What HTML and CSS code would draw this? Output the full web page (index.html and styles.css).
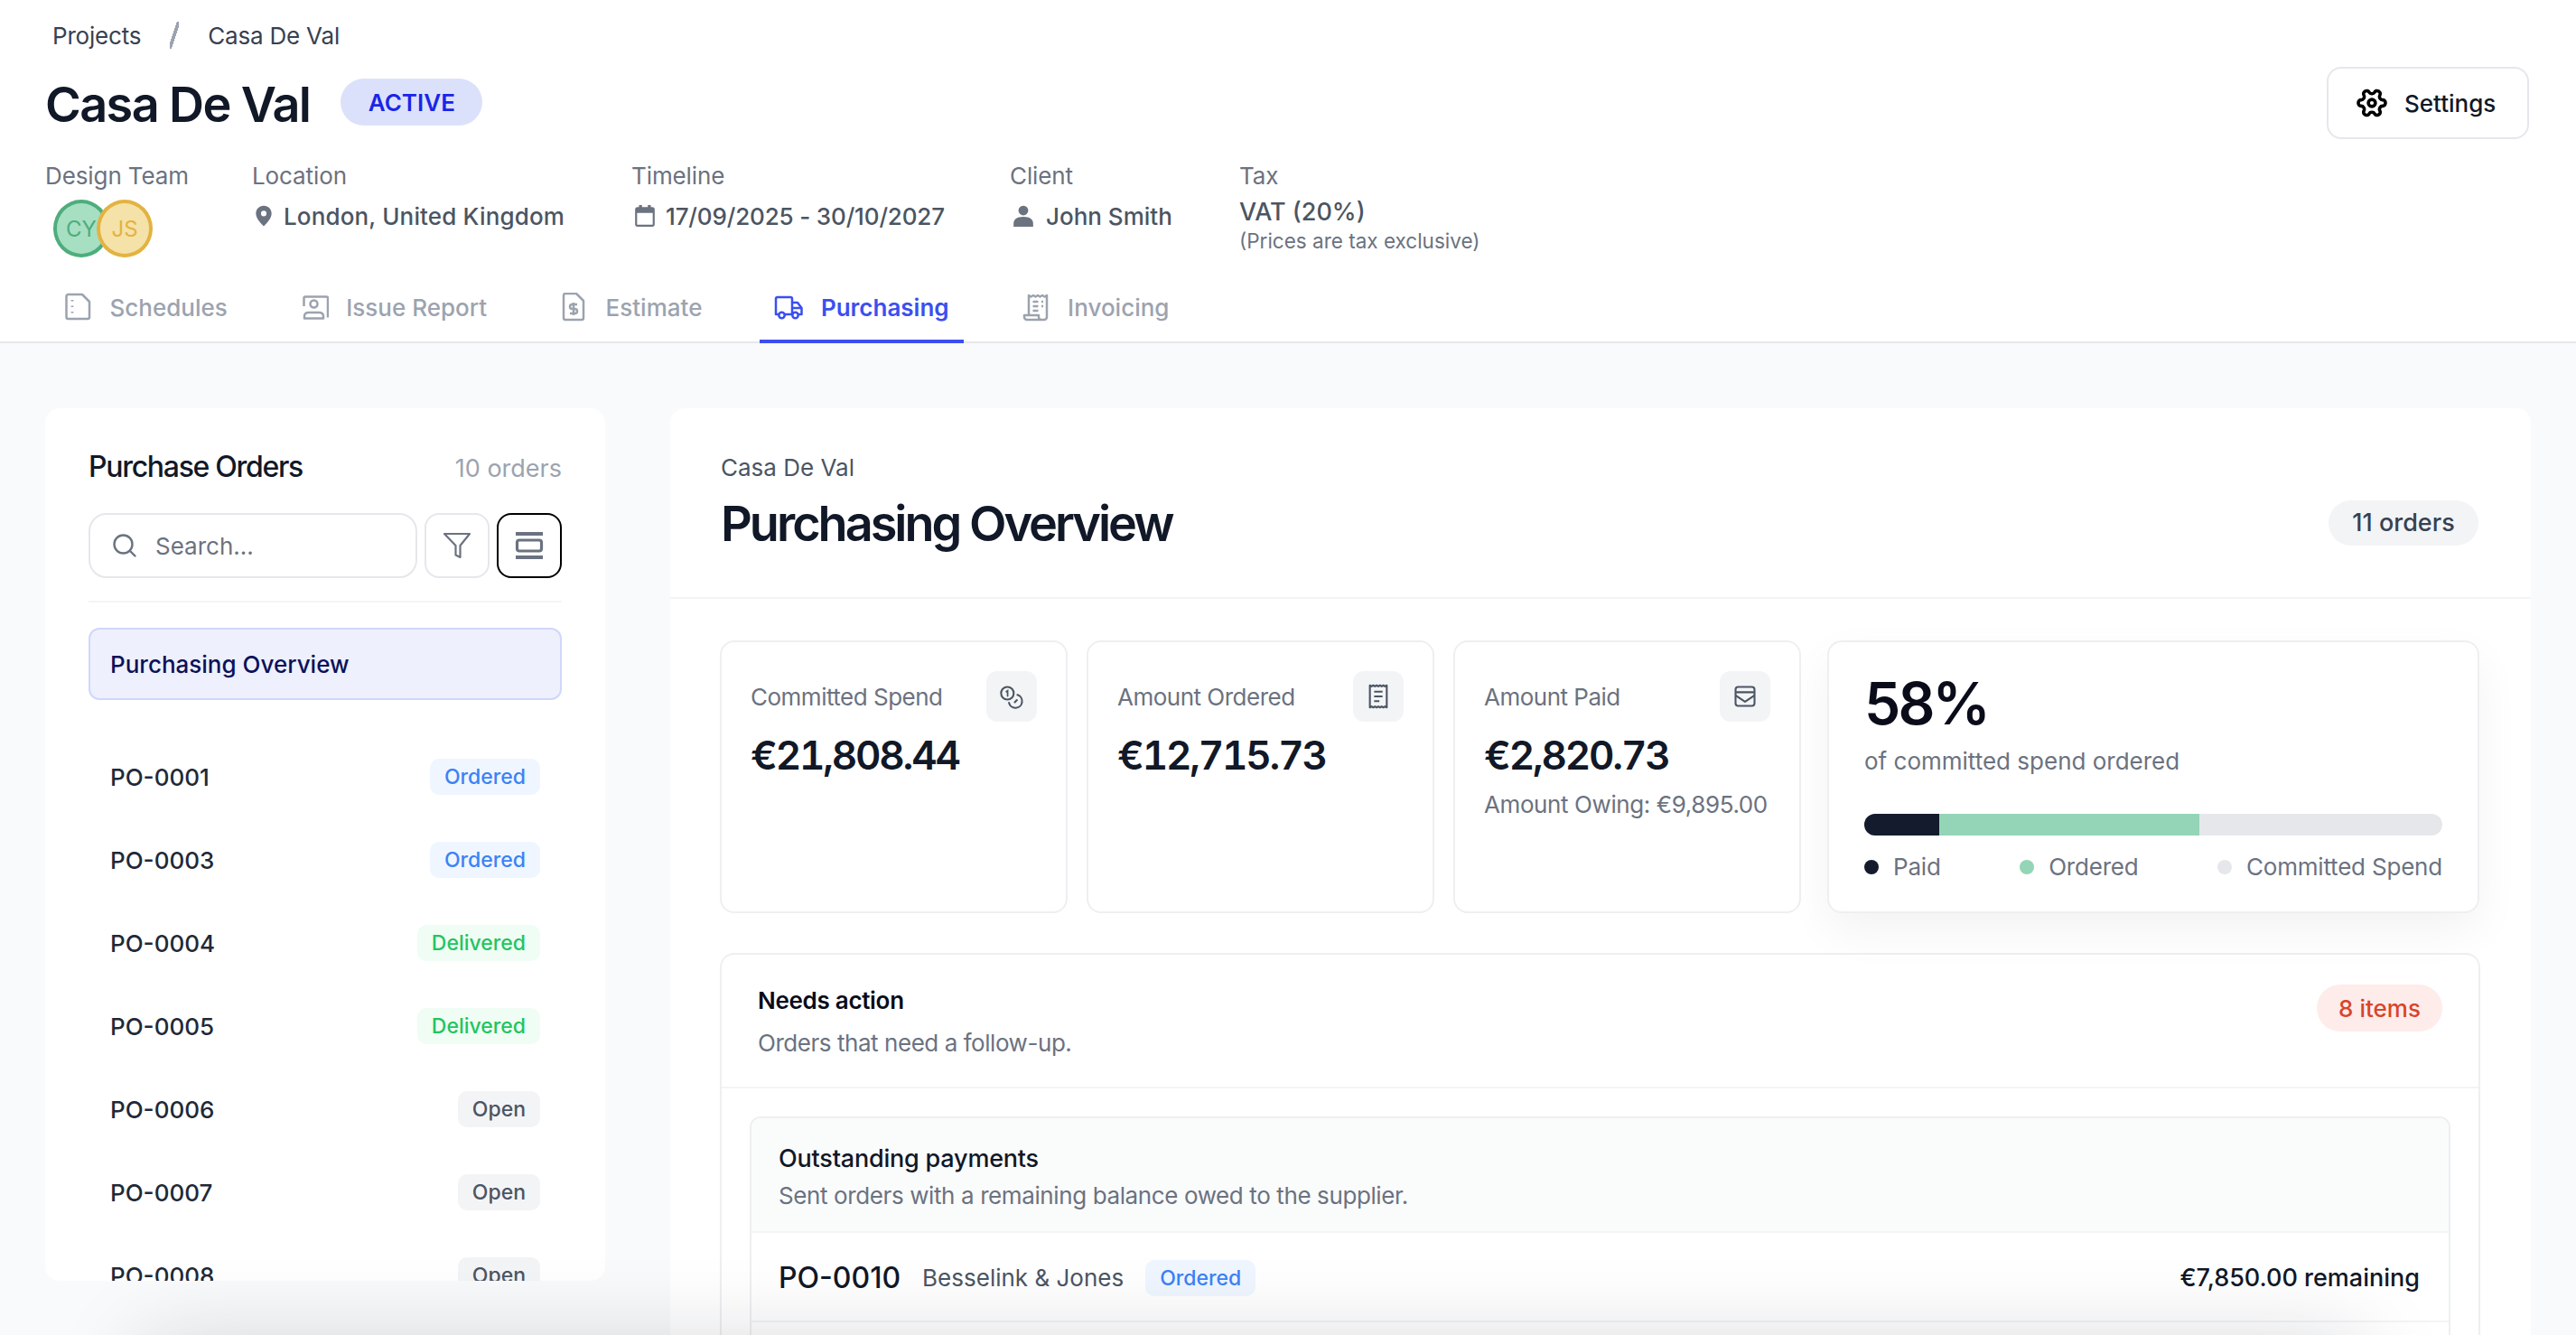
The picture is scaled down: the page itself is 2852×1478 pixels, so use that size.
FILE: index.html
```html
<!DOCTYPE html>
<html lang="en">
<head>
<meta charset="utf-8">
<title>Casa De Val</title>
<link rel="stylesheet" href="styles.css">
</head>
<body>
<div class="page">
  <header class="top">
    <nav class="crumbs"><span>Projects</span><i class="crumb-sep"></i><span>Casa De Val</span></nav>
    <div class="title-row">
      <div class="title-left"><h1>Casa De Val</h1><span class="status">ACTIVE</span></div>
      <button class="settings">
        <svg class="gear" viewBox="0 0 24 24" fill="none" stroke="#000" stroke-width="2.4" stroke-linejoin="round"><path transform="rotate(90 12 12)" d="M12.22 2h-.44a2 2 0 0 0-2 2v.18a2 2 0 0 1-1 1.73l-.43.25a2 2 0 0 1-2 0l-.15-.08a2 2 0 0 0-2.73.73l-.22.38a2 2 0 0 0 .73 2.73l.15.1a2 2 0 0 1 1 1.72v.51a2 2 0 0 1-1 1.74l-.15.09a2 2 0 0 0-.73 2.73l.22.38a2 2 0 0 0 2.73.73l.15-.08a2 2 0 0 1 2 0l.43.25a2 2 0 0 1 1 1.73V20a2 2 0 0 0 2 2h.44a2 2 0 0 0 2-2v-.18a2 2 0 0 1 1-1.73l.43-.25a2 2 0 0 1 2 0l.15.08a2 2 0 0 0 2.73-.73l.22-.39a2 2 0 0 0-.73-2.73l-.15-.08a2 2 0 0 1-1-1.74v-.5a2 2 0 0 1 1-1.74l.15-.09a2 2 0 0 0 .73-2.73l-.22-.38a2 2 0 0 0-2.73-.73l-.15.08a2 2 0 0 1-2 0l-.43-.25a2 2 0 0 1-1-1.73V4a2 2 0 0 0-2-2z"/><circle cx="12" cy="12" r="2.6"/></svg>
        Settings
      </button>
    </div>
    <div class="meta">
      <div class="meta-item m-team"><div class="meta-label">Design Team</div>
        <div class="avatars"><span class="avatar av-green">CY</span><span class="avatar av-yellow">JS</span></div></div>
      <div class="meta-item m-loc"><div class="meta-label">Location</div>
        <div class="meta-value"><svg class="mi" viewBox="0 0 24 24" fill="#6b7280"><path fill-rule="evenodd" d="M12 1.5c-4.6 0-8 3.5-8 8 0 4.8 4.6 10 8 13 3.4-3 8-8.2 8-13 0-4.500-3.400-8-8-8zm0 5.300a2.800 2.800 0 1 1 0 5.600 2.800 2.800 0 0 1 0-5.600z"/></svg>London, United Kingdom</div></div>
      <div class="meta-item m-time"><div class="meta-label">Timeline</div>
        <div class="meta-value"><svg class="mi" viewBox="0 0 24 24" fill="#6b7280"><path fill-rule="evenodd" d="M6 1h3v2h6V1h3v2h1.500A2.500 2.500 0 0 1 22 5.500v15a2.500 2.500 0 0 1-2.500 2.500h-15A2.500 2.500 0 0 1 2 20.500v-15A2.500 2.500 0 0 1 4.500 3H6zM4 9v11.500c0 .3.200.5.500.5h15c.3 0 .5-.2.500-.5V9z"/></svg>17/09/2025 - 30/10/2027</div></div>
      <div class="meta-item m-client"><div class="meta-label">Client</div>
        <div class="meta-value"><svg class="mi" viewBox="0 0 24 24" fill="#6b7280"><circle cx="12" cy="6.500" r="5"/><path d="M2 23v-3c0-4.500 3.500-7 10-7s10 2.500 10 7v3z"/></svg>John Smith</div></div>
      <div class="meta-item m-tax"><div class="meta-label">Tax</div>
        <div class="tax-value">VAT (20%)</div><div class="tax-note">(Prices are tax exclusive)</div></div>
    </div>
    <div class="tabs">
      <a class="tab"><svg class="ti" viewBox="0 0 32 32" fill="none" stroke="currentColor" stroke-width="2.500" stroke-linejoin="round"><path d="M3.500 4a2 2 0 0 1 2-2h15.500l8 8v17a2 2 0 0 1-2 2H5.500a2 2 0 0 1-2-2z"/><path d="M10 8v1.500M10 14.500v1.500M10 21v1.500" stroke-width="2.800"/></svg>Schedules</a>
      <a class="tab"><svg class="ti" viewBox="0 0 32 32" fill="none" stroke="currentColor" stroke-width="2.500" stroke-linejoin="round"><path d="M4.500 15V6a1.500 1.500 0 0 1 1.500-1.500h23.500A1.500 1.500 0 0 1 31 6v21.500"/><circle cx="15.500" cy="12.500" r="4"/><path d="M5 28.500V26c0-2.500 2-4 4.500-4h12c2.500 0 4.500 1.500 4.500 4v2.500z"/></svg>Issue Report</a>
      <a class="tab"><svg class="ti" viewBox="0 0 32 32" fill="none" stroke="currentColor" stroke-width="2.500" stroke-linejoin="round"><path d="M5 3a2 2 0 0 1 2-2h12l8 8v19a2 2 0 0 1-2 2H7a2 2 0 0 1-2-2z"/><path d="M20 13h-5.500a2.400 2.400 0 0 0 0 5h3a2.400 2.400 0 0 1 0 5H12M16 11v14"/></svg>Estimate</a>
      <a class="tab active"><svg class="ti" viewBox="0 0 32 32" fill="none" stroke="currentColor" stroke-width="2.500" stroke-linejoin="round"><path d="M5 24H2V7a2 2 0 0 1 2-2h14a2 2 0 0 1 2 2v17h-8M20 11h6l4.500 6v7H27"/><path d="M20 17h10"/><circle cx="8.500" cy="25" r="3.200"/><circle cx="23.500" cy="25" r="3.200"/></svg>Purchasing</a>
      <a class="tab"><svg class="ti" viewBox="0 0 32 32" fill="none" stroke="currentColor" stroke-width="2.500" stroke-linejoin="round"><path d="M8 25V3l2.500 1.500L13 3l2.500 1.500L18 3l2.500 1.500L23 3l2.500 1.500L28 3v24a3 3 0 0 1-3 3H6a3 3 0 0 1-3-3v-2h16v2a3 3 0 0 0 3 3"/><path d="M12.500 10h6M22 10h2M12.500 15h6M22 15h2M12.500 20h6"/></svg>Invoicing</a>
    </div>
  </header>

  <div class="content">
    <aside class="side">
      <div class="side-head"><h2>Purchase Orders</h2><span class="side-count">10 orders</span></div>
      <div class="tools">
        <div class="search"><svg class="s-ic" viewBox="0 0 28 28" fill="none" stroke="#6b7280" stroke-width="2.400" stroke-linecap="round"><circle cx="12.500" cy="12.500" r="10"/><path d="M20 20l5.500 5.500"/></svg><span>Search...</span></div>
        <button class="tool"><svg class="t-ic" viewBox="0 0 32 32" fill="none" stroke="#6b7280" stroke-width="2.200" stroke-linejoin="round"><path d="M2 3h28L19.500 16v13l-5 -2.500V16z"/></svg></button>
        <button class="tool on"><svg class="t-ic" viewBox="0 0 32 32" fill="none" stroke="#6b7280"><path d="M1 3h30M1 29h30" stroke-width="4"/><rect x="2.500" y="10" width="27" height="12" rx="2.500" stroke-width="3.200"/></svg></button>
      </div>
      <div class="ov-item">Purchasing Overview</div>
      <ul class="po-list">
        <li class="po"><span>PO-0001</span><span class="badge b-ordered">Ordered</span></li>
        <li class="po"><span>PO-0003</span><span class="badge b-ordered">Ordered</span></li>
        <li class="po"><span>PO-0004</span><span class="badge b-delivered">Delivered</span></li>
        <li class="po"><span>PO-0005</span><span class="badge b-delivered">Delivered</span></li>
        <li class="po"><span>PO-0006</span><span class="badge b-open">Open</span></li>
        <li class="po"><span>PO-0007</span><span class="badge b-open">Open</span></li>
        <li class="po"><span>PO-0008</span><span class="badge b-open">Open</span></li>
      </ul>
    </aside>

    <main class="panel">
      <div class="panel-head">
        <div><div class="panel-sup">Casa De Val</div><h2 class="panel-title">Purchasing Overview</h2></div>
        <span class="pill pill-grey">11 orders</span>
      </div>
      <div class="panel-body">
        <div class="stats">
          <div class="stat"><div class="stat-top"><span class="stat-label">Committed Spend</span><span class="stat-ic"><svg viewBox="0 0 24 24" fill="none" stroke="#4b5563" stroke-width="1.800" stroke-linecap="round"><circle cx="8" cy="9" r="6"/><path d="M7 7.500l1.200-.9v5" stroke-width="1.500"/><path d="M17.500 10.600A6.300 6.300 0 1 1 9.500 18M17 15.500l-2 2"/></svg></span></div><div class="stat-val">€21,808.44</div></div>
          <div class="stat"><div class="stat-top"><span class="stat-label">Amount Ordered</span><span class="stat-ic"><svg viewBox="0 0 24 24" fill="none" stroke="#4b5563" stroke-width="1.800" stroke-linejoin="round"><path d="M4 1.500l1.600 1 1.600-1 1.600 1 1.600-1 1.600 1 1.600-1 1.600 1 1.600-1 1.600 1 1.600-1v21l-1.600-1-1.600 1-1.600-1-1.600 1-1.600-1-1.600 1-1.600-1-1.600 1-1.600-1-1.600 1z"/><path d="M8 7.500h8M8 12h8M8 16.500h5"/></svg></span></div><div class="stat-val">€12,715.73</div></div>
          <div class="stat"><div class="stat-top"><span class="stat-label">Amount Paid</span><span class="stat-ic"><svg viewBox="0 0 24 24" fill="none" stroke="#4b5563" stroke-width="1.800" stroke-linejoin="round"><rect x="3" y="3" width="18" height="18" rx="2.500"/><path d="M3 8h18M3 11l9 6 9-6"/></svg></span></div><div class="stat-val">€2,820.73</div><div class="stat-sub">Amount Owing: €9,895.00</div></div>
          <div class="stat stat-wide">
            <div class="pct">58%</div>
            <div class="pct-sub">of committed spend ordered</div>
            <div class="bar"><i class="seg seg-paid"></i><i class="seg seg-ordered"></i></div>
            <div class="legend"><span><i class="dot d-paid"></i>Paid</span><span><i class="dot d-ordered"></i>Ordered</span><span><i class="dot d-spend"></i>Committed Spend</span></div>
          </div>
        </div>
        <section class="action">
          <div class="action-head">
            <div><div class="action-title">Needs action</div><div class="action-desc">Orders that need a follow-up.</div></div>
            <span class="pill pill-red">8 items</span>
          </div>
          <div class="action-body">
            <div class="group">
              <div class="group-head"><div class="group-title">Outstanding payments</div><div class="group-desc">Sent orders with a remaining balance owed to the supplier.</div></div>
              <div class="group-row"><span class="row-id">PO-0010</span><span class="row-sup">Besselink &amp; Jones</span><span class="badge b-ordered">Ordered</span><span class="row-amt">€7,850.00 remaining</span></div>
              <div class="group-row"></div>
            </div>
          </div>
        </section>
      </div>
    </main>
  </div>
  <div class="bottom-glow"></div>
</div>
</body>
</html>
```
FILE: styles.css
```css
* { box-sizing: border-box; }
html, body { margin: 0; padding: 0; }
body { font-family: Inter, "Liberation Sans", sans-serif; color: #111827; }
h1, h2, ul { margin: 0; padding: 0; }
button { font: inherit; background: #fff; cursor: pointer; }
.page { position: relative; width: 2852px; height: 1478px; overflow: hidden; background: #f9fafb; }

.top { height: 380px; background: #fff; border-bottom: 2px solid #e5e7eb; padding: 0 52px 0 50px; position: relative; }
.crumbs { height: 78px; display: flex; align-items: center; gap: 32px; padding-left: 8px; font-size: 26px; letter-spacing: -0.200px; color: #374151; }
.crumb-sep { width: 10px; height: 30px; background: linear-gradient(to bottom right, transparent 40%, #9ca3af 40%, #9ca3af 60%, transparent 60%); }
.title-row { height: 76px; display: flex; align-items: center; justify-content: space-between; }
.title-left { display: flex; align-items: center; gap: 34px; }
h1 { font-size: 54px; line-height: 76px; font-weight: 600; letter-spacing: -1.600px; color: #111827; }
.status { width: 157px; height: 52px; border-radius: 26px; background: #dce1fb; color: #1a25e8; font-size: 26px; font-weight: 600; display: flex; align-items: center; justify-content: center; margin-top: -6px; }
.settings { width: 224px; height: 80px; margin-top: -4px; border: 2px solid #e5e7eb; border-radius: 16px; display: flex; align-items: center; gap: 18px; padding: 0 0 0 30px; font-size: 26px; font-weight: 500; color: #111827; }
.gear { width: 36px; height: 36px; }

.meta { display: flex; margin-top: 25px; height: 116px; }
.meta-item { flex: none; }
.m-team { width: 229px; } .m-loc { width: 420px; } .m-time { width: 419px; } .m-client { width: 254px; }
.meta-label { font-size: 26px; letter-spacing: -0.100px; line-height: 32px; color: #6b7280; }
.avatars { display: flex; padding-left: 9px; margin-top: 10px; }
.avatar { width: 62px; height: 64px; border-radius: 50%; border: 4px solid; font-size: 24px; display: flex; align-items: center; justify-content: center; }
.av-green { background: #a7dfc3; border-color: #4ead7c; color: #4ead7c; }
.av-yellow { background: #f5e2a8; border-color: #e3b341; color: #e3b341; margin-left: -14px; position: relative; }
.meta-value { display: flex; align-items: center; gap: 10px; margin-top: 11px; padding-left: 2px; height: 34px; font-size: 26px; font-weight: 500; color: #4b5563; }
.m-loc .meta-value { gap: 9px; padding-left: 0; letter-spacing: 0.150px; }
.m-time .meta-value { letter-spacing: -0.150px; }
.m-client .meta-value { gap: 12px; }
.mi { width: 26px; height: 26px; flex: none; }
.tax-value { font-size: 27px; font-weight: 500; color: #4b5563; line-height: 36px; margin-top: 6px; }
.tax-note { font-size: 22.500px; color: #6b7280; line-height: 28px; }

.tabs { position: absolute; left: 54px; bottom: -2px; display: flex; gap: 48px; }
.tab { height: 62px; padding: 0 16px 14px; border-bottom: 4px solid transparent; display: flex; align-items: center; gap: 19.500px; font-size: 26px; font-weight: 500; color: #9ca3af; white-space: nowrap; }
.tab.active { color: #3b4ff0; border-bottom-color: #3b4ff0; font-weight: 600; }
.ti { width: 32px; height: 32px; flex: none; }

.content { display: flex; gap: 72px; padding: 72px 50px 0; height: 1098px; align-items: flex-start; }
.side { flex: none; width: 620px; height: 966px; overflow: hidden; background: #fff; border-radius: 16px; padding: 0 48px; }
.side-head { display: flex; align-items: center; justify-content: space-between; height: 64px; margin-top: 32px; }
.side-head h2 { font-size: 32px; font-weight: 500; letter-spacing: -1.300px; color: #111827; }
.side-count { font-size: 27px; color: #9ca3af; padding-top: 4px; }
.tools { display: flex; gap: 8px; margin-top: 20px; padding-bottom: 25px; border-bottom: 2px solid #f3f4f6; }
.search { flex: none; width: 364px; height: 72px; border: 2px solid #e5e7eb; border-radius: 20px; display: flex; align-items: center; gap: 20px; padding-left: 24px; font-size: 26px; color: #6b7280; }
.s-ic { width: 28px; height: 28px; }
.tool { flex: none; width: 72px; height: 72px; border: 2px solid #e5e7eb; border-radius: 16px; display: flex; align-items: center; justify-content: center; padding: 0; }
.tool.on { border: 2px solid #000; }
.t-ic { width: 32px; height: 32px; }
.ov-item { height: 80px; margin-top: 28px; background: #eef0fd; border: 2px solid #d0d7fb; border-radius: 12px; padding-left: 22px; display: flex; align-items: center; font-size: 26px; font-weight: 500; color: #0a1259; }
.po-list { list-style: none; margin-top: 39px; }
.po { height: 92px; display: flex; align-items: center; justify-content: space-between; padding: 0 24px; font-size: 26px; font-weight: 500; color: #1f2937; }
.badge { height: 40px; padding: 0 16px; border-radius: 10px; display: inline-flex; align-items: center; font-size: 23px; font-weight: 500; }
.b-ordered { background: #eff6ff; color: #3b82f6; }
.b-delivered { background: #f0fdf4; color: #22c55e; }
.b-open { background: #f3f4f6; color: #4b5563; }

.panel { flex: none; width: 2060px; height: 1300px; background: #fff; border-radius: 16px 16px 0 0; }
.panel-head { height: 211px; padding: 7px 58px 0 56px; border-bottom: 2px solid #f3f4f6; display: flex; justify-content: space-between; align-items: center; }
.panel-sup { font-size: 26px; line-height: 32px; color: #4b5563; }
.panel-title { font-size: 54px; line-height: 76px; font-weight: 600; letter-spacing: -3px; color: #111827; margin-top: 8px; }
.pill { display: inline-flex; align-items: center; justify-content: center; border-radius: 26px; font-size: 26px; font-weight: 500; }
.pill-grey { width: 166px; height: 50px; background: #f3f4f6; color: #374151; margin-top: 37px; font-size: 27px; }
.panel-body { padding: 46px 56px 0 55px; }
.stats { display: flex; gap: 21px; }
.stat { flex: none; width: 385px; height: 302px; border: 2px solid #eeeff1; border-radius: 16px; padding: 32px; }
.stat-wide { width: 722px; margin-left: 8px; box-shadow: 0 20px 50px rgba(17,24,39,.05); padding: 30px 39px 0; }
.stat-top { display: flex; justify-content: space-between; align-items: center; height: 56px; }
.stat-label { font-size: 26px; letter-spacing: -0.500px; color: #6b7280; }
.stat-ic { width: 56px; height: 56px; border-radius: 12px; background: #f3f4f6; display: flex; align-items: center; justify-content: center; }
.stat-ic svg { width: 28px; height: 28px; }
.stat-val { font-size: 44px; font-weight: 600; font-variant-numeric: tabular-nums; letter-spacing: -2.200px; color: #111827; line-height: 56px; margin-top: 9px; }
.stat-sub { font-size: 26px; letter-spacing: -0.400px; white-space: nowrap; color: #6b7280; line-height: 32px; margin-top: 11px; }
.pct { font-size: 64px; font-weight: 600; line-height: 76px; color: #0a0c1a; letter-spacing: -2.800px; }
.pct-sub { font-size: 26px; color: #6b7280; line-height: 34px; margin-top: 9px; }
.bar { height: 24px; border-radius: 12px; background: #e5e7eb; display: flex; overflow: hidden; margin-top: 41px; }
.seg { display: block; height: 100%; }
.seg-paid { width: 13%; background: #141b2d; }
.seg-ordered { width: 45%; background: #93d5b6; }
.legend { display: flex; justify-content: space-between; margin-top: 19px; font-size: 26px; letter-spacing: -0.200px; color: #6b7280; line-height: 32px; }
.legend span { display: flex; align-items: center; gap: 16px; }
.dot { width: 16px; height: 16px; border-radius: 50%; }
.d-paid { background: #141b2d; } .d-ordered { background: #93d5b6; } .d-spend { background: #e5e7eb; }

.action { margin-top: 44px; border: 2px solid #eeeff1; border-radius: 16px; background: #fff; }
.action-head { height: 148px; padding: 0 40px; border-bottom: 2px solid #f3f4f6; display: flex; justify-content: space-between; align-items: center; }
.action-title { font-size: 26px; font-weight: 600; line-height: 34px; color: #0a0c1a; letter-spacing: -0.300px; margin-top: 3px; }
.action-desc { font-size: 26px; letter-spacing: -0.450px; line-height: 34px; color: #6b7280; margin-top: 13px; }
.pill-red { width: 139px; height: 52px; background: #fdecea; color: #d9442b; margin-bottom: 28px; }
.action-body { padding: 31px; }
.group { border: 2px solid #eeeff1; border-radius: 12px; overflow: hidden; }
.group-head { height: 127px; background: #fafbfb; border-bottom: 2px solid #f3f4f6; padding: 28px 30px 0; }
.group-title { font-size: 27px; font-weight: 500; letter-spacing: -0.200px; line-height: 34px; color: #111827; }
.group-desc { font-size: 26px; letter-spacing: -0.390px; line-height: 34px; color: #6b7280; margin-top: 7px; }
.group-row { height: 99px; border-bottom: 2px solid #f3f4f6; padding: 2px 32px 0 30px; display: flex; align-items: center; gap: 24px; }
.row-id { font-size: 32px; font-weight: 500; color: #111827; }
.row-sup { font-size: 26px; color: #4b5563; }
.row-amt { margin-left: auto; font-size: 27px; font-weight: 500; color: #111827; }

.bottom-glow { position: absolute; left: 200px; right: 280px; top: 1530px; height: 80px; box-shadow: 0 0 100px 40px rgba(17,24,39,.18); background: rgba(17,24,39,.18); }
```
